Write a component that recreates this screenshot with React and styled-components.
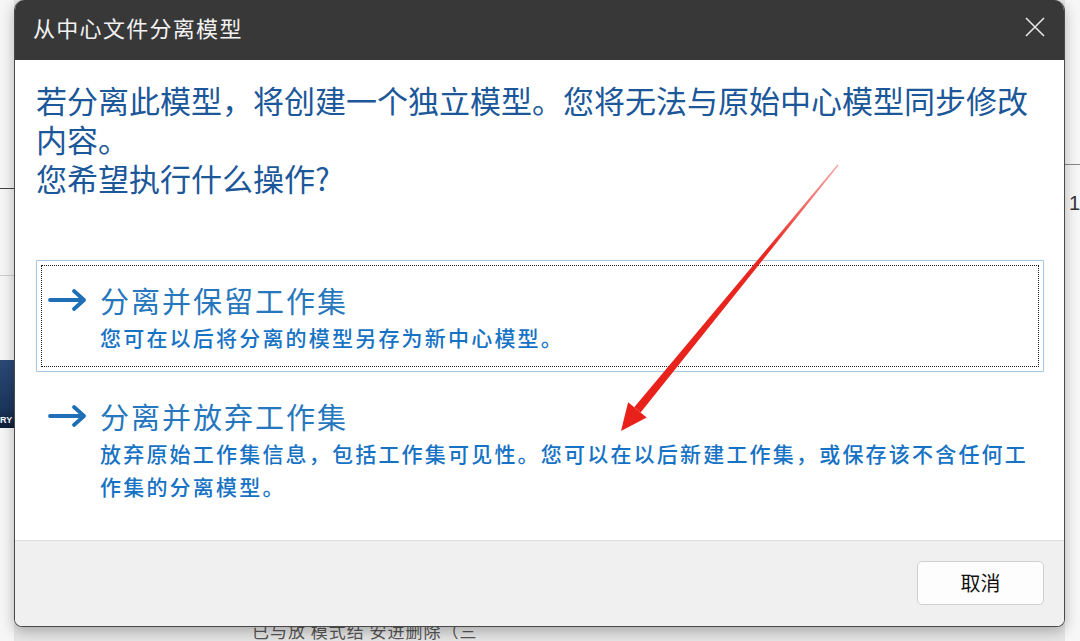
import React from "react";
import styled, { createGlobalStyle } from "styled-components";

const GlobalStyle = createGlobalStyle`
  html, body {
    margin: 0;
    padding: 0;
    background: #f3f3f3;
  }
  body {
    font-family: "Noto Sans CJK SC", "Noto Sans", sans-serif;
  }
`;

const Page = styled.div`
  position: relative;
  width: 1080px;
  height: 641px;
  overflow: hidden;
  background: #f4f4f4;
`;

// the app that sits behind the dialog
const Backdrop = styled.div`
  display: flex;
  justify-content: space-between;
  height: 100%;
`;

const SideStrip = styled.div`
  width: ${(p) => p.width}px;
  display: flex;
  flex-direction: column;
  background: ${(p) => p.bg || "#f6f6f6"};
`;

const Rule = styled.div`
  height: 1px;
  background: ${(p) => p.color || "#555"};
  margin-top: ${(p) => p.top}px;
`;

const Logo = styled.div`
  margin-top: ${(p) => p.top}px;
  height: 68px;
  background: linear-gradient(180deg, #2b4a78 0%, #1c365e 70%, #0f1f38 100%);
  color: #fff;
  font: 700 9px/1 "Liberation Sans", sans-serif;
  display: flex;
  align-items: flex-end;
  padding-bottom: 3px;
  box-sizing: border-box;
`;

const SideText = styled.div`
  margin-top: ${(p) => p.top}px;
  padding-left: 4px;
  font: 20px/1 "Liberation Sans", sans-serif;
  color: #333;
`;

const BottomText = styled.div`
  align-self: flex-end;
  margin-bottom: 0;
  margin-left: 238px;
  font: 17px/20px "Noto Sans CJK SC", sans-serif;
  color: #555;
  letter-spacing: 1px;
`;

const Center = styled.div`
  flex: 1;
  display: flex;
  background: #e6e6e6;
`;

const Dialog = styled.div`
  position: absolute;
  left: 14px;
  top: 0;
  width: 1051px;
  height: 627px;
  box-sizing: border-box;
  display: flex;
  flex-direction: column;
  border: 1px solid #4a4a4a;
  border-top: none;
  border-radius: 10px 11px 8px 8px;
  overflow: hidden;
  box-shadow: 0 4px 14px rgba(0, 0, 0, 0.28);
  background: #fff;
`;

const TitleBar = styled.div`
  height: 60px;
  box-sizing: border-box;
  flex: none;
  background: #383838;
  display: flex;
  align-items: center;
  justify-content: space-between;
  padding: 0 18px 6px 18px;
`;

const Title = styled.div`
  color: #f2f2f2;
  font-size: 22px;
  line-height: 28px;
  letter-spacing: 1.3px;
`;

const CloseButton = styled.button`
  width: 22px;
  height: 22px;
  padding: 0;
  border: none;
  background: none;
  display: flex;
  align-items: center;
  justify-content: center;
`;

const Body = styled.div`
  flex: 1;
  padding: 20px 20px 0 21px;
`;

const Heading = styled.p`
  margin: 0;
  font-size: 31px;
  line-height: 39px;
  color: #1b5799;
`;

const OptionList = styled.div`
  margin-top: 63px;
  display: flex;
  flex-direction: column;
  gap: 4px;
`;

const Option = styled.div`
  display: grid;
  grid-template-columns: 52px 1fr;
  padding: 21px 4px 17px 11px;
  border: 1px solid ${(p) => (p.focused ? "#a8c9e2" : "transparent")};
  outline: ${(p) => (p.focused ? "1px dotted #1a1a1a" : "none")};
  outline-offset: -6px;
  cursor: pointer;
`;

const ArrowCell = styled.div`
  height: 36px;
  display: flex;
  align-items: center;
`;

const OptionTitle = styled.div`
  font-size: 29px;
  line-height: 36px;
  letter-spacing: 2px;
  color: #2677bd;
`;

const OptionDesc = styled.div`
  grid-column: 2;
  margin-top: 3px;
  font-size: 21px;
  line-height: 33px;
  letter-spacing: 2.2px;
  font-weight: 500;
  color: #1672c4;
`;

const Footer = styled.div`
  height: 83px;
  flex: none;
  background: #f0f0f0;
  border-top: 1px solid #dddddd;
  display: flex;
  align-items: center;
  justify-content: flex-end;
  padding: 0 20px 2px 0;
`;

const Button = styled.button`
  width: 127px;
  height: 44px;
  background: #fdfdfd;
  border: 1px solid #cfcfcf;
  border-radius: 5px;
  font-family: "Noto Sans CJK SC", sans-serif;
  font-size: 20px;
  color: #111;
`;

const Annotation = styled.svg`
  position: absolute;
  inset: 0;
  pointer-events: none;
`;

const BlueArrow = () => (
  <svg width="40" height="24" viewBox="0 0 40 24">
    <path
      d="M2 12 H36 M26 3 L36 12 L26 21"
      fill="none"
      stroke="#1f6fb6"
      strokeWidth="3.8"
      strokeLinecap="round"
      strokeLinejoin="round"
    />
  </svg>
);

const options = [
  {
    title: "分离并保留工作集",
    desc: "您可在以后将分离的模型另存为新中心模型。",
    focused: true,
  },
  {
    title: "分离并放弃工作集",
    desc: "放弃原始工作集信息，包括工作集可见性。您可以在以后新建工作集，或保存该不含任何工作集的分离模型。",
    focused: false,
  },
];

export default function App() {
  return (
    <Page>
      <GlobalStyle />
      <Backdrop>
        <SideStrip width={14}>
          <Rule top={188} color="#444" />
          <Rule top={86} color="#cfcfcf" />
          <Logo top={84}>RY</Logo>
        </SideStrip>
        <Center>
          <BottomText>已与放 模式结 安进删除（三</BottomText>
        </Center>
        <SideStrip width={15} bg="#f7f7f7">
          <Rule top={164} color="#888" />
          <SideText top={28}>1</SideText>
        </SideStrip>
      </Backdrop>

      <Dialog>
        <TitleBar>
          <Title>从中心文件分离模型</Title>
          <CloseButton aria-label="关闭">
            <svg width="20" height="20" viewBox="0 0 20 20">
              <path d="M1 1 L19 19 M19 1 L1 19" stroke="#e6e6e6" strokeWidth="1.6" />
            </svg>
          </CloseButton>
        </TitleBar>

        <Body>
          <Heading>
            若分离此模型，将创建一个独立模型。您将无法与原始中心模型同步修改内容。
            <br />
            您希望执行什么操作?
          </Heading>

          <OptionList>
            {options.map((o) => (
              <Option key={o.title} focused={o.focused}>
                <ArrowCell>
                  <BlueArrow />
                </ArrowCell>
                <OptionTitle>{o.title}</OptionTitle>
                <OptionDesc>{o.desc}</OptionDesc>
              </Option>
            ))}
          </OptionList>
        </Body>

        <Footer>
          <Button>取消</Button>
        </Footer>
      </Dialog>

      <Annotation width="1080" height="641" viewBox="0 0 1080 641">
        <defs>
          <linearGradient id="redfade" x1="838" y1="164" x2="640" y2="410" gradientUnits="userSpaceOnUse">
            <stop offset="0" stopColor="#ee4a44" stopOpacity="0.5" />
            <stop offset="0.35" stopColor="#e8261f" />
            <stop offset="1" stopColor="#e8221b" />
          </linearGradient>
        </defs>
        <polygon
          points="838.5,165.4 837.5,164.6 634.2,407.3 640.6,412.5"
          fill="url(#redfade)"
        />
        <polygon points="621,431 628.1,402.3 646.7,417.5" fill="#e8221b" />
      </Annotation>
    </Page>
  );
}
